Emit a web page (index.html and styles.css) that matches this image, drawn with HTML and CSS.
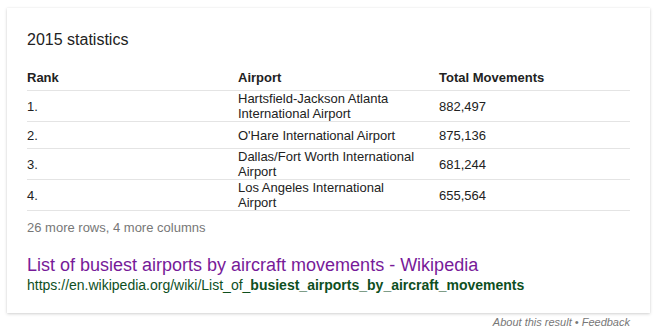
FILE: index.html
```html
<!DOCTYPE html>
<html>
<head>
<meta charset="utf-8">
<link rel="stylesheet" href="styles.css">
</head>
<body>
<div class="card">
  <div class="heading">2015 statistics</div>
  <table class="stats">
    <colgroup>
      <col class="c-rank"><col class="c-airport"><col class="c-total">
    </colgroup>
    <thead>
      <tr><th>Rank</th><th>Airport</th><th>Total Movements</th></tr>
    </thead>
    <tbody>
      <tr><td>1.</td><td class="airport">Hartsfield-Jackson Atlanta International Airport</td><td>882,497</td></tr>
      <tr><td>2.</td><td class="airport">O'Hare International Airport</td><td>875,136</td></tr>
      <tr><td>3.</td><td class="airport">Dallas/Fort Worth International Airport</td><td>681,244</td></tr>
      <tr><td>4.</td><td class="airport">Los Angeles International Airport</td><td>655,564</td></tr>
    </tbody>
  </table>
  <div class="more">26 more rows, 4 more columns</div>
  <a class="title" href="#">List of busiest airports by aircraft movements - Wikipedia</a>
  <div class="url">https://en.wikipedia.org/wiki/List_of_<b>busiest_airports_by_aircraft_movements</b></div>
</div>
<div class="footer">About this result • Feedback</div>
</body>
</html>
```
FILE: styles.css
```css
html, body {
  margin: 0;
  background: #fff;
}
body {
  padding: 8px 7px 0 7px;
  font-family: "Liberation Sans", Arial, sans-serif;
  color: #222;
}
.card {
  width: 643px;
  box-sizing: border-box;
  padding: 22px 20px 20px 20px;
  background: #fff;
  box-shadow: 0 1px 3px rgba(0,0,0,0.18), 0 0 1px rgba(0,0,0,0.08);
}
.heading {
  font-size: 16px;
  line-height: 20px;
  margin-bottom: 20px;
}
.stats {
  width: 603px;
  border-collapse: collapse;
  table-layout: fixed;
  font-size: 13px;
  line-height: 15px;
}
.c-rank { width: 211px; }
.c-airport { width: 201px; }
.c-total { width: 191px; }
.stats th {
  text-align: left;
  font-weight: bold;
  padding: 0 8px 5px 0;
  border-bottom: 1px solid #e4e4e4;
}
.stats td {
  height: 26px;
  padding: 0 8px 0 0;
  vertical-align: middle;
  border-bottom: 1px solid #e4e4e4;
}
.stats td.airport {
  padding-right: 18px;
}
.more {
  margin-top: 9px;
  font-size: 13px;
  line-height: 15px;
  color: #777;
}
.title {
  display: block;
  margin-top: 19px;
  font-size: 18px;
  line-height: 22px;
  color: #771a99;
  text-decoration: none;
}
.url {
  margin-top: 1px;
  font-size: 14px;
  line-height: 16px;
  color: #0e4f1e;
}
.url b {
  font-weight: bold;
}
.footer {
  width: 623px;
  margin-top: 3px;
  text-align: right;
  font-size: 11px;
  line-height: 13px;
  font-style: italic;
  color: #777;
}
```
